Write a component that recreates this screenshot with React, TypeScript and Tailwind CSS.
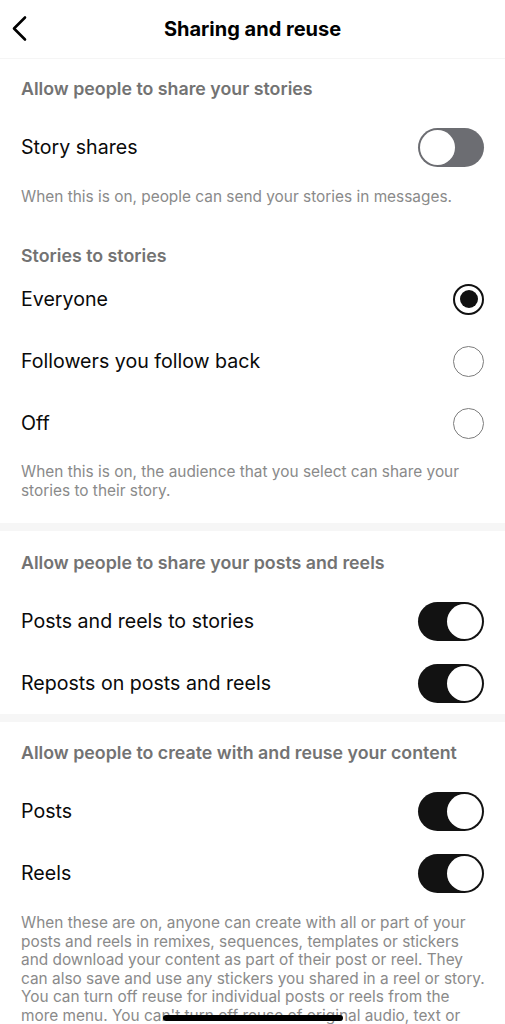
import React from "react";

function Toggle({ on }: { on: boolean }) {
  return (
    <div
      className={
        "relative h-[39px] w-[66px] shrink-0 rounded-full " +
        (on ? "bg-[#121212]" : "bg-[#6c6d72]")
      }
    >
      <div
        className={
          "absolute top-[2px] h-[35px] w-[35px] rounded-full bg-white " +
          (on ? "right-[2px]" : "left-[2px]")
        }
      />
    </div>
  );
}

function Radio({ selected }: { selected: boolean }) {
  return selected ? (
    <div className="flex h-[31px] w-[31px] shrink-0 items-center justify-center rounded-full border-[2.5px] border-[#111]">
      <div className="h-[18px] w-[18px] rounded-full bg-[#111]" />
    </div>
  ) : (
    <div className="h-[31px] w-[31px] shrink-0 rounded-full border-[1.6px] border-[#7d7d7d]" />
  );
}

function Row({ label, children }: { label: string; children: React.ReactNode }) {
  return (
    <div className="flex h-[62px] items-center justify-between">
      <span className="text-[19.6px] leading-[24px] text-[#0a0a0a]">{label}</span>
      {children}
    </div>
  );
}

function Heading({ children }: { children: React.ReactNode }) {
  return (
    <div className="text-[17.8px] font-semibold leading-[24px] text-[#737373]">{children}</div>
  );
}

export default function App() {
  return (
    <div
      className="relative h-[1024px] w-[505px] overflow-hidden bg-white"
      style={{ fontFamily: "Inter, 'Noto Sans', sans-serif" }}
    >
      <div className="relative flex h-[59px] items-center justify-center border-b border-[#f5f5f5]">
        <svg
          className="absolute left-[10px] top-[15px]"
          width="20"
          height="27"
          viewBox="0 0 20 27"
          fill="none"
        >
          <path d="M15 2.5 L4 13.5 L15 24.5" stroke="#000" strokeWidth="2.6" strokeLinecap="round" strokeLinejoin="round" />
        </svg>
        <span className="text-[20px] font-bold leading-[24px] text-black">Sharing and reuse</span>
      </div>

      <div className="px-[21px] pt-[18px] pb-[23px]">
        <Heading>Allow people to share your stories</Heading>
        <div className="mt-[15px]">
          <Row label="Story shares">
            <Toggle on={false} />
          </Row>
        </div>
        <p className="mt-[9px] whitespace-nowrap text-[15.4px] leading-[19px] text-[#8a8a8a]">
          When this is on, people can send your stories in messages.
        </p>
        <div className="mt-[38px]">
          <Heading>Stories to stories</Heading>
        </div>
        <Row label="Everyone">
          <Radio selected />
        </Row>
        <Row label="Followers you follow back">
          <Radio selected={false} />
        </Row>
        <Row label="Off">
          <Radio selected={false} />
        </Row>
        <p className="mt-[9px] whitespace-nowrap text-[15.4px] leading-[18.5px] text-[#8a8a8a]">
          When this is on, the audience that you select can share your
          <br />
          stories to their story.
        </p>
      </div>

      <div className="h-[8px] bg-[#f6f6f6]" />

      <div className="px-[21px] pt-[20px]">
        <Heading>Allow people to share your posts and reels</Heading>
        <div className="mt-[15px]">
          <Row label="Posts and reels to stories">
            <Toggle on />
          </Row>
          <Row label="Reposts on posts and reels">
            <Toggle on />
          </Row>
        </div>
      </div>

      <div className="h-[8px] bg-[#f6f6f6]" />

      <div className="px-[21px] pt-[19px]">
        <Heading>Allow people to create with and reuse your content</Heading>
        <div className="mt-[15px]">
          <Row label="Posts">
            <Toggle on />
          </Row>
          <Row label="Reels">
            <Toggle on />
          </Row>
        </div>
        <p className="mt-[10px] whitespace-nowrap text-[15.4px] leading-[18.6px] text-[#8a8a8a]">
          When these are on, anyone can create with all or part of your
          <br />
          posts and reels in remixes, sequences, templates or stickers
          <br />
          and download your content as part of their post or reel. They
          <br />
          can also save and use any stickers you shared in a reel or story.
          <br />
          You can turn off reuse for individual posts or reels from the
          <br />
          more menu. You can't turn off reuse of original audio, text or
        </p>
      </div>

      <div className="absolute left-[163px] top-[1015px] h-[6px] w-[180px] rounded-full bg-black" />
    </div>
  );
}
